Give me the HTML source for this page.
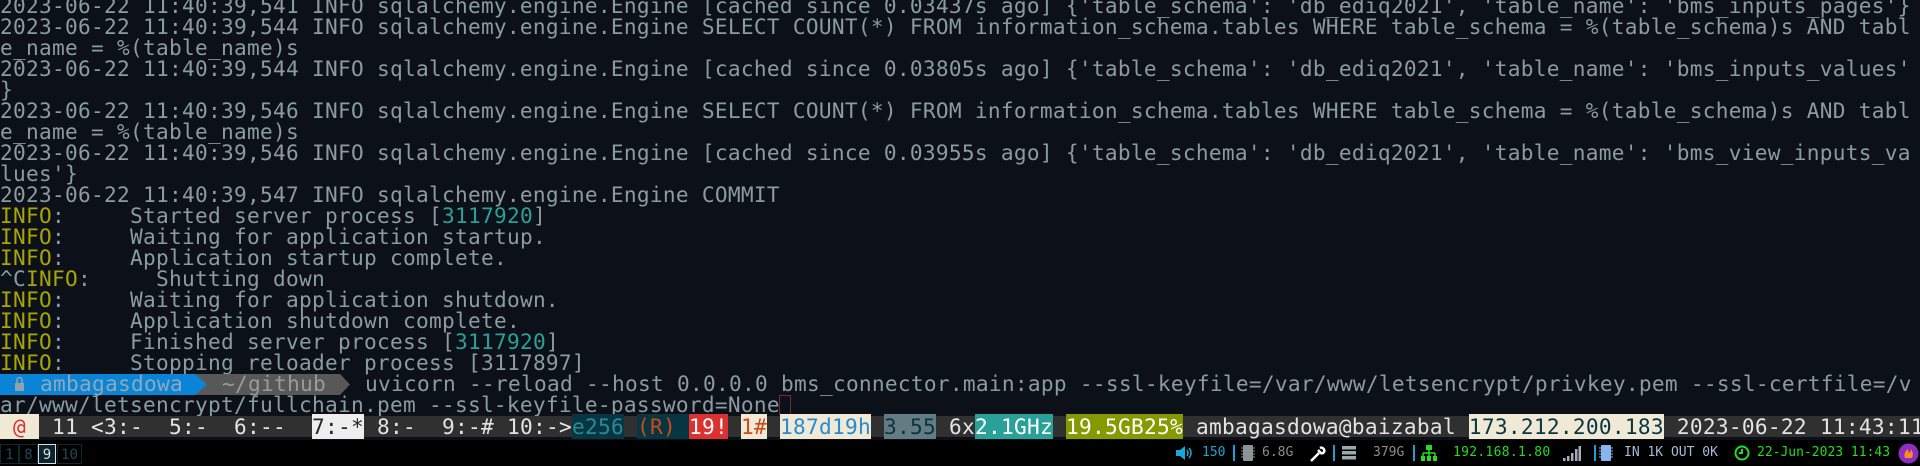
<!DOCTYPE html>
<html><head><meta charset="utf-8">
<style>
html,body{margin:0;padding:0;}
body{width:1920px;height:466px;overflow:hidden;background:#0c1018;position:relative;font-family:"DejaVu Sans Mono","Liberation Mono",monospace;}
pre{margin:0;position:absolute;left:0;top:-5px;font-family:"DejaVu Sans Mono","Liberation Mono",monospace;font-size:21.13px;letter-spacing:0.28px;line-height:21px;color:#8d9ba1;white-space:pre;}
.y{color:#a9a600}
.t{color:#2aa198}
#status{position:absolute;left:0;top:416px;height:21px;width:1920px;background:#303030;}
#status pre{top:0;color:#e4e4e4;}
.cr{background:#efe9d6}
.wb{background:#eeeeee;color:#262626}
.dk{background:#073642}
.rd{background:#dc322f;color:#fff}
.sl{background:#657b83;color:#073642}
.tl{background:#2aa198;color:#fff}
.ol{background:#859900;color:#fff}
#panel{position:absolute;left:0;top:440px;width:1920px;height:26px;background:#000;font-size:13px;}
.ws{position:absolute;top:4px;height:20px;border:1px solid #0c2a33;color:#1d4a55;font-size:14px;line-height:20px;text-align:center;box-sizing:border-box;}
.pt{position:absolute;top:5px;line-height:16px;white-space:pre;}
.sep{position:absolute;top:5px;width:1.5px;height:16px;background:#1a9fd8;}
</style></head><body>
<pre>2023-06-22 11:40:39,541 INFO sqlalchemy.engine.Engine [cached since 0.03437s ago] {'table_schema': 'db_ediq2021', 'table_name': 'bms_inputs_pages'}
2023-06-22 11:40:39,544 INFO sqlalchemy.engine.Engine SELECT COUNT(*) FROM information_schema.tables WHERE table_schema = %(table_schema)s AND tabl
e_name = %(table_name)s
2023-06-22 11:40:39,544 INFO sqlalchemy.engine.Engine [cached since 0.03805s ago] {'table_schema': 'db_ediq2021', 'table_name': 'bms_inputs_values'
}
2023-06-22 11:40:39,546 INFO sqlalchemy.engine.Engine SELECT COUNT(*) FROM information_schema.tables WHERE table_schema = %(table_schema)s AND tabl
e_name = %(table_name)s
2023-06-22 11:40:39,546 INFO sqlalchemy.engine.Engine [cached since 0.03955s ago] {'table_schema': 'db_ediq2021', 'table_name': 'bms_view_inputs_va
lues'}
2023-06-22 11:40:39,547 INFO sqlalchemy.engine.Engine COMMIT
<span class="y">INFO</span>:     Started server process [<span class="t">3117920</span>]
<span class="y">INFO</span>:     Waiting for application startup.
<span class="y">INFO</span>:     Application startup complete.
^C<span class="y">INFO</span>:     Shutting down
<span class="y">INFO</span>:     Waiting for application shutdown.
<span class="y">INFO</span>:     Application shutdown complete.
<span class="y">INFO</span>:     Finished server process [<span class="t">3117920</span>]
<span class="y">INFO</span>:     Stopping reloader process [3117897]

ar/www/letsencrypt/fullchain.pem --ssl-keyfile-password=None</pre>

<svg style="position:absolute;left:0;top:374px" width="360" height="21">
<rect x="195" y="0" width="145" height="21" fill="#585858"/>
<polygon points="340,0 350,10.5 340,21" fill="#585858"/>
<rect x="0" y="0" width="195" height="21" fill="#0a84d6"/>
<polygon points="195,0 207,10.5 195,21" fill="#0a84d6"/>
<rect x="15" y="9" width="9" height="8" fill="#8fa3ad"/>
<path d="M17 9 V6 a2.5 2.5 0 0 1 5 0 V9" stroke="#8fa3ad" stroke-width="1.6" fill="none"/>
</svg>
<pre style="top:373px;left:40px;color:#8fa9b8">ambagasdowa</pre>
<pre style="top:373px;left:222px;color:#9a9a9a">~/github</pre>
<pre style="top:373px;left:365px">uvicorn --reload --host 0.0.0.0 bms_connector.main:app --ssl-keyfile=/var/www/letsencrypt/privkey.pem --ssl-certfile=/v</pre>
<div style="position:absolute;left:779px;top:395px;width:12px;height:20px;border:1px solid #7a2630;box-sizing:border-box"></div>

<div id="status"><pre><span class="cr" style="color:#dc322f"> @ </span> 11 &lt;3:-  5:-  6:--  <span class="wb">7:-*</span> 8:-  9:-# 10:-&gt;<span class="dk" style="color:#2a8a96">e256</span> <span class="dk" style="color:#cb4b16">(R) </span><span class="rd">19!</span> <span class="cr" style="color:#cb4b16">1#</span> <span class="cr" style="color:#268bd2">187d19h</span> <span class="sl">3.55</span> 6x<span class="tl">2.1GHz</span> <span class="ol">19.5GB25%</span> ambagasdowa@baizabal <span class="cr" style="color:#073642">173.212.200.183</span> 2023-06-22 11:43:11</pre></div>

<div id="panel">
<div class="ws" style="left:0;width:19px">1</div>
<div class="ws" style="left:19px;width:19px">8</div>
<div class="ws" style="left:38px;width:18px;border-color:#ddd;color:#ddd;background:#0a2530">9</div>
<div class="ws" style="left:57px;width:25px">10</div>

<svg style="position:absolute;left:1176px;top:6px" width="16" height="14"><polygon points="0,4 4,4 9,0 9,14 4,10 0,10" fill="#1aa7d6"/><path d="M11 4 q2 3 0 6 M13 2 q4 5 0 10" stroke="#1aa7d6" stroke-width="1.5" fill="none"/></svg>
<div class="pt" style="left:1202px;color:#1aa7d6">150</div>
<div class="sep" style="left:1233px"></div>
<svg style="position:absolute;left:1241px;top:5px" width="14" height="16"><rect x="2" y="0" width="10" height="16" rx="1" fill="#8a9598"/><path d="M0 3h2M0 6h2M0 9h2M0 12h2M12 3h2M12 6h2M12 9h2M12 12h2" stroke="#8a9598"/></svg>
<div class="pt" style="left:1262px;color:#8c8c8c">6.8G</div>
<svg style="position:absolute;left:1310px;top:5px" width="16" height="17"><path d="M1 16 L9 8" stroke="#fff" stroke-width="2.5"/><path d="M8 5 L12 9 M10 3 a3 3 0 0 1 4 4 L12 9" stroke="#fff" stroke-width="2.5" fill="none"/></svg>
<div class="sep" style="left:1333px"></div>
<svg style="position:absolute;left:1342px;top:6px" width="14" height="14"><rect x="0" y="0" width="14" height="3.5" fill="#9aa"/><rect x="0" y="5" width="14" height="3.5" fill="#9aa"/><rect x="0" y="10" width="14" height="3.5" fill="#9aa"/></svg>
<div class="pt" style="left:1373px;color:#8c8c8c">379G</div>
<div class="sep" style="left:1413px"></div>
<svg style="position:absolute;left:1421px;top:5px" width="16" height="16"><rect x="5" y="0" width="6" height="5" fill="#22dd22"/><path d="M8 5v3M2 8h12M2 8v3M8 8v3M14 8v3" stroke="#22dd22" stroke-width="1.5"/><rect x="0" y="11" width="4" height="5" fill="#22dd22"/><rect x="6" y="11" width="4" height="5" fill="#22dd22"/><rect x="12" y="11" width="4" height="5" fill="#22dd22"/></svg>
<div class="pt" style="left:1453px;color:#22dd22;letter-spacing:0.3px">192.168.1.80</div>
<svg style="position:absolute;left:1563px;top:6px" width="18" height="15"><rect x="0" y="12" width="2.5" height="3" fill="#aab"/><rect x="4" y="10" width="2.5" height="5" fill="#aab"/><rect x="8" y="7" width="2.5" height="8" fill="#aab"/><rect x="12" y="3" width="2.5" height="12" fill="#aab"/><rect x="15.5" y="0" width="2.5" height="15" fill="#aab"/></svg>
<div class="sep" style="left:1594px"></div>
<svg style="position:absolute;left:1599px;top:5px" width="14" height="16"><rect x="2" y="0" width="10" height="16" rx="1" fill="#8ab4f0"/><path d="M0 3h2M0 6h2M0 9h2M0 12h2M12 3h2M12 6h2M12 9h2M12 12h2" stroke="#8ab4f0"/></svg>
<div class="pt" style="left:1624px;color:#a8b8d8">IN 1K OUT 0K</div>
<svg style="position:absolute;left:1734px;top:5px" width="16" height="16"><circle cx="8" cy="8" r="6.5" stroke="#22dd22" stroke-width="2" fill="none"/><path d="M8 4v4h-3" stroke="#22dd22" stroke-width="2" fill="none"/></svg>
<div class="pt" style="left:1757px;color:#22dd22">22-Jun-2023 11:43</div>
<svg style="position:absolute;left:1898px;top:3px" width="21" height="21"><circle cx="10.5" cy="10.5" r="10" fill="#8a2fc0"/><path d="M7 15 q-2-5 3-9 q0 3 2 4 q1-2 1-4 q3 4 1 9 z" fill="#ff8a1e"/></svg>
</div>
</body></html>
